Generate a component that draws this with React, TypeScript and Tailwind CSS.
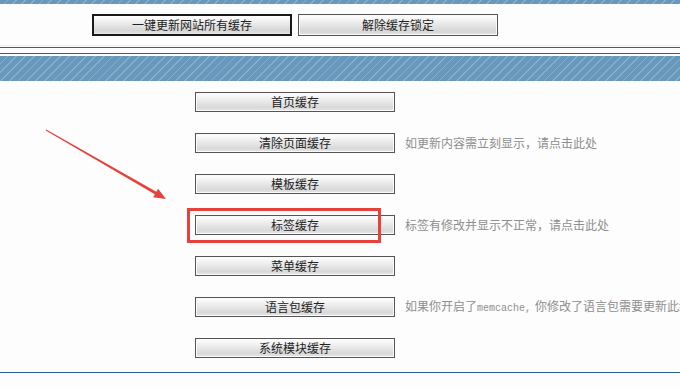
import React from "react";

const stripe =
  "bg-[repeating-linear-gradient(135deg,#6898bb_0px,#6898bb_5px,#86afcd_5px,#86afcd_6.2px)]";

function SmallBtn({ label }: { label: string }) {
  return (
    <div className="w-[200px] h-[20px] shrink-0 border border-[#555] bg-[linear-gradient(#ffffff,#f3f3f3_25%,#d9d9d9_80%,#e6e6e6)] shadow-[inset_0_0_0_1px_#fafafa] flex items-center justify-center text-[12px] text-[#222] leading-none">
      {label}
    </div>
  );
}

const rows: { label: string; hint?: React.ReactNode }[] = [
  { label: "首页缓存" },
  { label: "清除页面缓存", hint: "如更新内容需立刻显示，请点击此处" },
  { label: "模板缓存" },
  { label: "标签缓存", hint: "标签有修改并显示不正常，请点击此处" },
  { label: "菜单缓存" },
  {
    label: "语言包缓存",
    hint: (
      <>
        如果你开启了
        <span className="text-[10px] mr-[4px]" style={{ fontFamily: '"Liberation Mono", monospace' }}>
          memcache,
        </span>
        你修改了语言包需要更新此缓存
      </>
    ),
  },
  { label: "系统模块缓存" },
];

export default function App() {
  return (
    <div
      className="relative w-[680px] h-[388px] overflow-hidden bg-[#fdfdfd]"
      style={{ fontFamily: '"Noto Sans CJK SC", "Liberation Sans", sans-serif' }}
    >
      <div className={`h-[4px] ${stripe}`} />
      <div className="flex gap-[6px] pl-[92px] pt-[10px]">
        <div className="w-[200px] h-[22px] border-2 border-[#1a1a1a] bg-[linear-gradient(#ffffff,#f3f3f3_25%,#d6d6d6_80%,#e4e4e4)] flex items-center justify-center text-[12px] text-[#222] leading-none">
          一键更新网站所有缓存
        </div>
        <div className="w-[200px] h-[22px] border border-[#555] bg-[linear-gradient(#ffffff,#f3f3f3_25%,#d6d6d6_80%,#e4e4e4)] shadow-[inset_0_0_0_1px_#fafafa] flex items-center justify-center text-[12px] text-[#222] leading-none">
          解除缓存锁定
        </div>
      </div>
      <div className="mt-[9px] h-px bg-[#ececec]" />
      <div className="mt-px h-px bg-[#2f5f8c]" />
      <div className="mt-[5px] h-px bg-[#2f5f8c]" />
      <div className={`mt-[2px] h-[25px] ${stripe}`} />
      <div className="flex flex-col gap-[21px] pt-[11px]">
        {rows.map((r) => (
          <div key={r.label} className="flex items-center pl-[195px] h-[20px]">
            <SmallBtn label={r.label} />
            {r.hint && (
              <span className="ml-[10px] whitespace-nowrap text-[12px] text-[#8e8e8e] leading-none">
                {r.hint}
              </span>
            )}
          </div>
        ))}
      </div>
      <div className="mt-[14px] h-px bg-[#2f5f8c]" />

      <div className="absolute left-[187px] top-[208px] w-[194px] h-[35px] border-[3px] border-[#e8413c]" />
      <svg className="absolute left-0 top-0" width="680" height="388" viewBox="0 0 680 388">
        <polygon
          points="45.75,130.43 46.25,129.57 156.35,191.7 158.1,188.7 166,199 153.1,197.3 154.85,194.3"
          fill="#e8413c"
        />
      </svg>
    </div>
  );
}
